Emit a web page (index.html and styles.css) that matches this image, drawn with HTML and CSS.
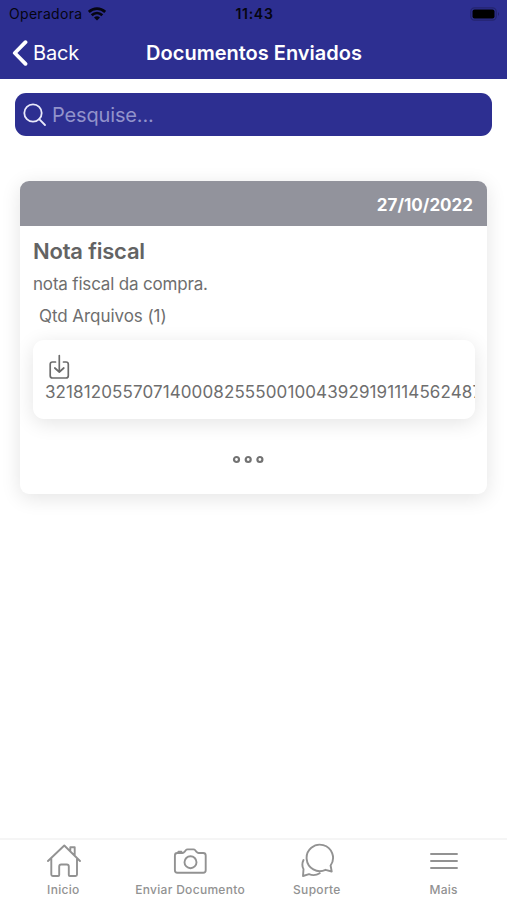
FILE: index.html
```html
<!DOCTYPE html>
<html lang="pt-BR">
<head>
<meta charset="utf-8">
<title>Documentos Enviados</title>
<link rel="stylesheet" href="styles.css">
</head>
<body>
<div class="screen">
  <header class="header">
    <div class="status">
      <div class="carrier"><span class="carrier-name">Operadora</span>
        <svg class="wifi" viewBox="0 0 18 14" width="18" height="14" fill="none" stroke="#050510" stroke-width="2.7"><path d="M.8 4.900C5.500.5 12.500.5 17.200 4.900M3.700 8.200C6.800 5.300 11.200 5.300 14.300 8.200"/><path d="M9 13.500 6 10.500Q9 8 12 10.500Z" fill="#050510" stroke="none"/></svg>
      </div>
      <span class="time">11:43</span>
      <svg class="battery" viewBox="0 0 30 14" width="30" height="14"><rect x=".8" y=".8" width="25.400" height="12.400" rx="3.600" fill="none" stroke="#24256f" stroke-width="1.200"/><rect x="2.500" y="2.500" width="22" height="9" rx="2" fill="#000"/><path d="M28 5q2 2 0 4z" fill="#20206a"/></svg>
    </div>
    <div class="nav">
      <a class="back"><svg viewBox="0 0 16 26" width="16" height="26" fill="none" stroke="#fff" stroke-width="3.800" stroke-linecap="round" stroke-linejoin="round"><path d="M13.500 2.200 2.800 13l10.700 10.800"/></svg><span>Back</span></a>
      <h1 class="title">Documentos Enviados</h1>
    </div>
  </header>
  <main class="content">
    <div class="search">
      <svg viewBox="0 0 24 24" width="24" height="24" fill="none" stroke="#e9e9fa" stroke-width="1.800" stroke-linecap="round"><circle cx="10" cy="10" r="8.700"/><path d="m16.200 16.200 5.800 5.800"/></svg>
      <span class="placeholder">Pesquise...</span>
    </div>
    <article class="card">
      <div class="card-head">27/10/2022</div>
      <div class="card-body">
        <h2 class="card-title">Nota fiscal</h2>
        <p class="desc">nota fiscal da compra.</p>
        <p class="count">Qtd Arquivos (1)</p>
        <div class="file">
          <div class="file-inner">
            <svg viewBox="0 0 24 26" width="24" height="26" fill="none" stroke="#6c6c6c" stroke-width="1.700" stroke-linecap="round" stroke-linejoin="round"><path d="M7.500 8H4.500Q2.200 8 2.200 10.300V21.700Q2.200 24 4.500 24H18Q20.300 24 20.300 21.700V10.300Q20.300 8 18 8H15.500M11.300 1.500V17.500M6.800 14l4.500 4 4.500-4"/></svg>
            <div class="file-name">32181205570714000825550010043929191114562487</div>
          </div>
        </div>
        <svg class="more" viewBox="0 0 32 10" width="32" height="10" fill="none" stroke="#737373" stroke-width="2.200"><circle cx="4.500" cy="5.500" r="2.500"/><circle cx="16.200" cy="5.500" r="2.500"/><circle cx="27.900" cy="5.500" r="2.500"/></svg>
      </div>
    </article>
  </main>
  <nav class="tabs">
    <a class="tab"><svg viewBox="0 0 36 36" width="36" height="36"><path d="M3 18 19.300 2.500 35 18M6.300 15.500V31.500Q6.300 33 7.800 33H13.200Q14.200 33 14.200 32V23.500Q14.200 21.500 16.200 21.500H21.800Q23.800 21.500 23.800 23.500V32Q23.800 33 24.800 33H30.500Q32 33 32 31.500V15.500M25.300 7.500V4.200H29.700V12"/></svg><span>Inicio</span></a>
    <a class="tab"><svg viewBox="0 0 36 36" width="36" height="36"><path d="M5.200 10H10.500Q11.700 10 12.500 8.800L14 7Q14.500 6.400 15.500 6.400H21.500Q22.500 6.400 23 7L24.500 8.800Q25.400 10 26.600 10H31.200Q33.700 10 33.700 12.500V27.200Q33.700 29.700 31.200 29.700H5.400Q2.900 29.700 2.900 27.200V12.500Q2.900 10 5.200 10ZM6.400 9.500V8.800H9.400V9.500"/><circle cx="18.500" cy="19.200" r="6"/></svg><span>Enviar Documento</span></a>
    <a class="tab"><svg viewBox="0 0 36 36" width="36" height="36"><path d="M31.600 22.500A13.200 13.200 0 1 0 26.500 26.800L32.700 28.500ZM4.500 17C2.800 20.500 3 23.200 4.500 26.200L4 33L10 31.200C14 32.800 17.500 32.300 20.700 30.200"/></svg><span>Suporte</span></a>
    <a class="tab"><svg viewBox="0 0 36 36" width="36" height="36"><path d="M5 11H31M5 18H31M5 25H31"/></svg><span>Mais</span></a>
  </nav>
</div>
</body>
</html>
```
FILE: styles.css
```css
* { box-sizing: border-box; }
body { margin: 0; background: #fff; font-family: Inter, "Liberation Sans", sans-serif; }
h1, h2, p { margin: 0; }
svg { display: block; flex: none; }
.screen { width: 507px; height: 900px; display: flex; flex-direction: column; overflow: hidden; }
.header { height: 79px; background: #2d2f91; flex: none; }
.status { height: 27px; padding: 0 7px 0 9px; display: grid; grid-template-columns: 1fr auto 1fr; align-items: center; color: #050510; font-size: 14px; }
.carrier { display: flex; align-items: center; gap: 6px; }
.carrier-name { letter-spacing: .3px; }
.time { font-weight: 600; letter-spacing: .7px; }
.battery { justify-self: end; }
.nav { height: 51px; padding: 0 11px 0 12px; display: grid; grid-template-columns: 1fr auto 1fr; align-items: center; color: #fff; }
.back { display: flex; align-items: center; gap: 5px; font-size: 20px; letter-spacing: -.2px; }
.title { font-size: 20px; font-weight: 600; letter-spacing: 0; }
.content { flex: 1; padding: 14px 15px 0; }
.search { height: 43px; border-radius: 11px; background: #2d2f91; display: flex; align-items: center; gap: 5px; padding-left: 8px; width: 477px; }
.placeholder { font-size: 20px; letter-spacing: -.15px; color: #9293cb; }
.card { width: 467px; height: 313px; margin: 45px 0 0 5px; border-radius: 9px; box-shadow: 0 4px 20px rgba(0, 0, 0, .11); background: #fff; overflow: hidden; }
.card-head { height: 45px; background: #92939c; color: #fff; font-size: 17px; font-weight: 700; line-height: 49px; padding-right: 14px; text-align: right; }
.card-body { padding: 11px 13px; color: #6e6e6e; display: flex; flex-direction: column; }
.card-title { font-size: 22px; line-height: 28px; font-weight: 600; letter-spacing: -.2px; color: #636363; }
.desc { margin-top: 6px; font-size: 17px; line-height: 26px; letter-spacing: -.18px; }
.count { margin: 6px 0 0 6px; font-size: 17px; line-height: 26px; letter-spacing: -.06px; }
.file { width: 442px; height: 79px; margin-top: 11px; border-radius: 11px; background: #fff; box-shadow: 0 4px 20px rgba(0, 0, 0, .11); }
.file-inner { height: 100%; overflow: hidden; border-radius: 11px; padding: 14px 0 0 12px; }
.file-inner svg { margin-left: 3px; }
.file-name { font-size: 17px; line-height: 25px; white-space: nowrap; letter-spacing: .11px; }
.more { margin: 35px 0 0 199px; }
.tabs { height: 62px; flex: none; border-top: 2px solid #f5f5f5; display: grid; grid-template-columns: repeat(4, 1fr); }
.tab { display: flex; flex-direction: column; align-items: center; padding-top: 3px; color: #929292; font-size: 12px; line-height: 18px; font-weight: 500; letter-spacing: .3px; white-space: nowrap; }
.tab svg { fill: none; stroke: #929292; stroke-width: 1.9; stroke-linecap: round; stroke-linejoin: round; }
.tab span { margin-top: 2px; }
```
